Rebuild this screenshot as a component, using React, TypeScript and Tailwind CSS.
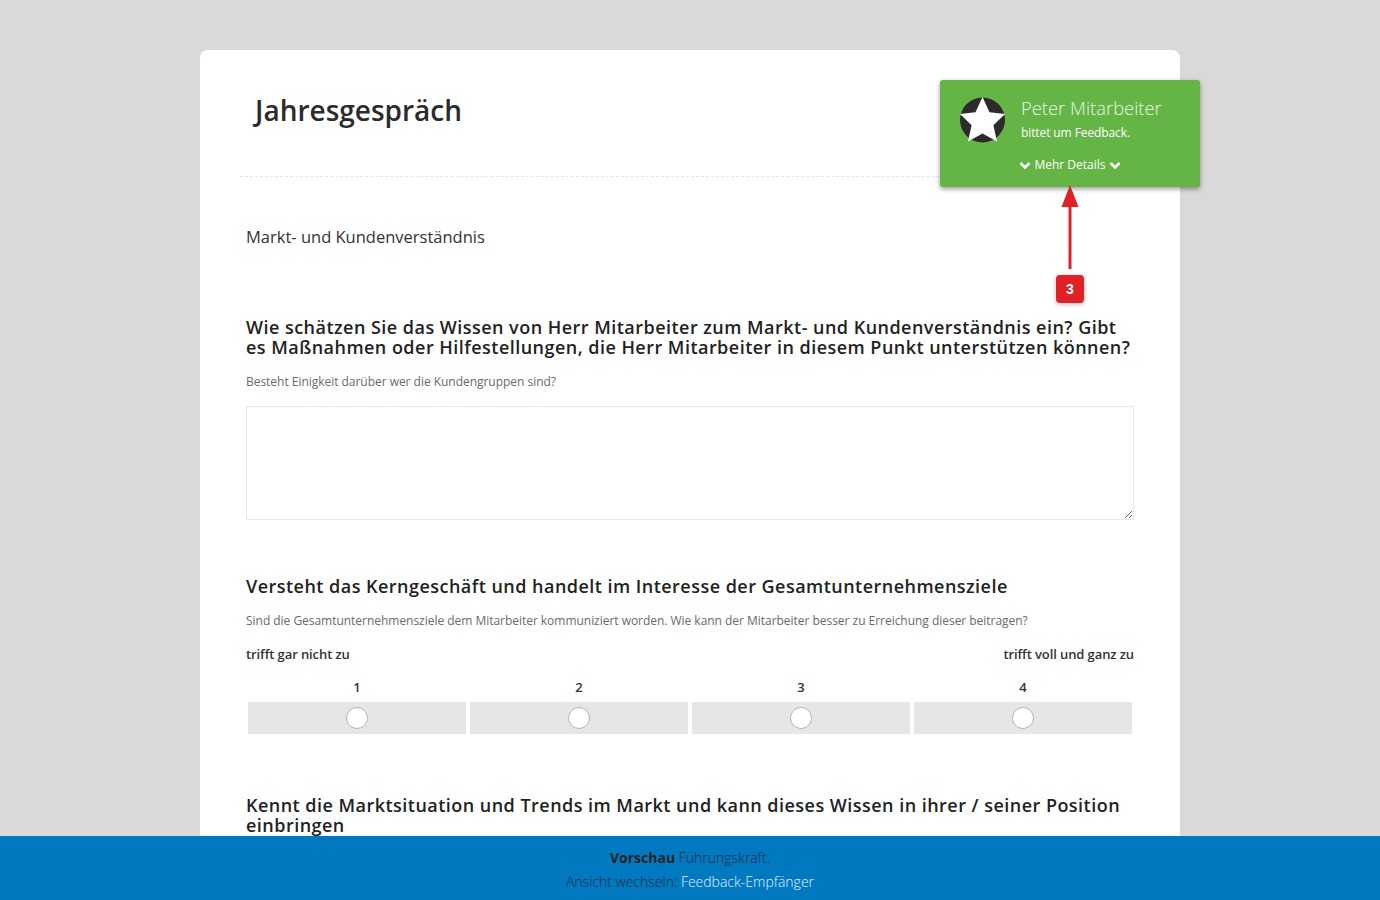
import React from "react";

function Chevron() {
  return (
    <svg width="12" height="9" viewBox="0 0 12 9" className="inline-block" aria-hidden="true">
      <path d="M1.5 2 L6 6.5 L10.5 2" fill="none" stroke="#fff" strokeWidth="2.6" />
    </svg>
  );
}

function Question({ children }: { children: React.ReactNode }) {
  return <h2 className="text-[18px] leading-[20px] font-semibold tracking-[0.47px] text-[#222]">{children}</h2>;
}

function Hint({ children }: { children: React.ReactNode }) {
  return <p className="text-[12px] leading-[18px] tracking-[-0.03px] text-[#6a6a6a]">{children}</p>;
}

export default function App() {
  return (
    <div className="h-[900px] overflow-hidden bg-[#d9d9d9] pt-[50px] font-['Open_Sans',sans-serif] text-[#222]">
      <main className="relative mx-auto w-[980px] rounded-t-lg rounded-b-lg bg-white px-[40px] pb-10">
        <header className="h-[127px] border-b border-dashed border-[#e6e6e6] pt-[41px] pl-[15px]">
          <h1 className="text-[28px] leading-[38px] font-semibold text-[#2b2b2b]">Jahresgespräch</h1>
        </header>

        <section className="px-[6px]">
          <h3 className="mt-[48px] text-[16.5px] leading-[24px] text-[#333]">Markt- und Kundenverständnis</h3>

          <div className="mt-[68px]">
            <Question>
              Wie schätzen Sie das Wissen von Herr Mitarbeiter zum Markt- und Kundenverständnis ein? Gibt es Maßnahmen oder Hilfestellungen, die Herr Mitarbeiter in diesem Punkt unterstützen können?
            </Question>
          </div>
          <div className="mt-[16px]">
            <Hint>Besteht Einigkeit darüber wer die Kundengruppen sind?</Hint>
          </div>
          <textarea className="mt-[15px] block h-[114px] w-full resize-y border border-[#e6e6e6] bg-white" />

          <div className="mt-[56px]">
            <Question>Versteht das Kerngeschäft und handelt im Interesse der Gesamtunternehmensziele</Question>
          </div>
          <div className="mt-[16px]">
            <Hint>Sind die Gesamtunternehmensziele dem Mitarbeiter kommuniziert worden. Wie kann der Mitarbeiter besser zu Erreichung dieser beitragen?</Hint>
          </div>
          <div className="mt-[15px] flex justify-between text-[13px] leading-[18px] font-semibold tracking-[-0.1px] text-[#333]">
            <span>trifft gar nicht zu</span>
            <span>trifft voll und ganz zu</span>
          </div>
          <div className="mt-[15px] grid grid-cols-4 gap-x-1 px-[2px]">
            {[1, 2, 3, 4].map((n) => (
              <div key={n}>
                <div className="h-[18px] text-center text-[13px] leading-[18px] font-semibold text-[#333]">{n}</div>
                <div className="mt-[6px] flex h-[32px] items-center justify-center bg-[#e6e6e6]">
                  <span className="block h-[22px] w-[22px] rounded-full border border-[#b5b5b5] bg-white" />
                </div>
              </div>
            ))}
          </div>

          <div className="mt-[61px]">
            <Question>Kennt die Marktsituation und Trends im Markt und kann dieses Wissen in ihrer / seiner Position einbringen</Question>
          </div>
        </section>

        <aside className="absolute top-[30px] left-[740px] h-[107px] w-[260px] rounded-[3px] bg-[#64b446] text-white shadow-[0_2px_5px_rgba(0,0,0,0.4)]">
          <div className="flex pt-[17px] pl-[20px]">
            <svg width="46" height="46" viewBox="0 0 46 46" className="shrink-0" aria-hidden="true">
              <circle cx="22.5" cy="23" r="22.5" fill="#2b2b2b" />
              <path d="M22.5 0 L29.5 15.2 L45 17 L33.4 28.2 L37 44.6 L22.5 36.4 L8 44.6 L11.6 28.2 L0 17 L15.5 15.2 Z" fill="#fff" />
            </svg>
            <div className="ml-[15px]">
              <div className="-mt-px text-[18.4px] leading-[24px] font-light text-[#eaf5e5]">Peter Mitarbeiter</div>
              <div className="mt-[4px] text-[12px] leading-[18px] tracking-[-0.1px]">bittet um Feedback.</div>
            </div>
          </div>
          <div className="mt-[13px] flex items-center justify-center gap-[3px] text-[12px] leading-[18px]">
            <Chevron />
            <span>Mehr Details</span>
            <Chevron />
          </div>
        </aside>

        <svg width="20" height="86" viewBox="0 0 20 86" className="absolute top-[134px] left-[860px]" aria-hidden="true">
          <path d="M10 1 L18.5 23 L11.5 23 L11.5 85 L8.5 85 L8.5 23 L1.5 23 Z" fill="#e02227" />
        </svg>
        <div className="absolute top-[225px] left-[856px] flex h-[28px] w-[28px] items-center justify-center rounded-[4px] bg-[#e02227] font-['Liberation_Sans',sans-serif] text-[14px] font-bold text-white shadow-[0_1px_5px_rgba(0,0,0,0.3)]">
          3
        </div>
      </main>

      <footer className="fixed right-0 bottom-0 left-0 h-[64px] bg-[#0079c1] pt-[10px] text-center text-[14px] leading-[24px] font-light text-[#14293f]">
        <div>
          <strong className="font-bold text-[#222]">Vorschau</strong> Führungskraft.
        </div>
        <div>
          Ansicht wechseln: <span className="text-[#e2f0fa]">Feedback-Empfänger</span>
        </div>
      </footer>
    </div>
  );
}
